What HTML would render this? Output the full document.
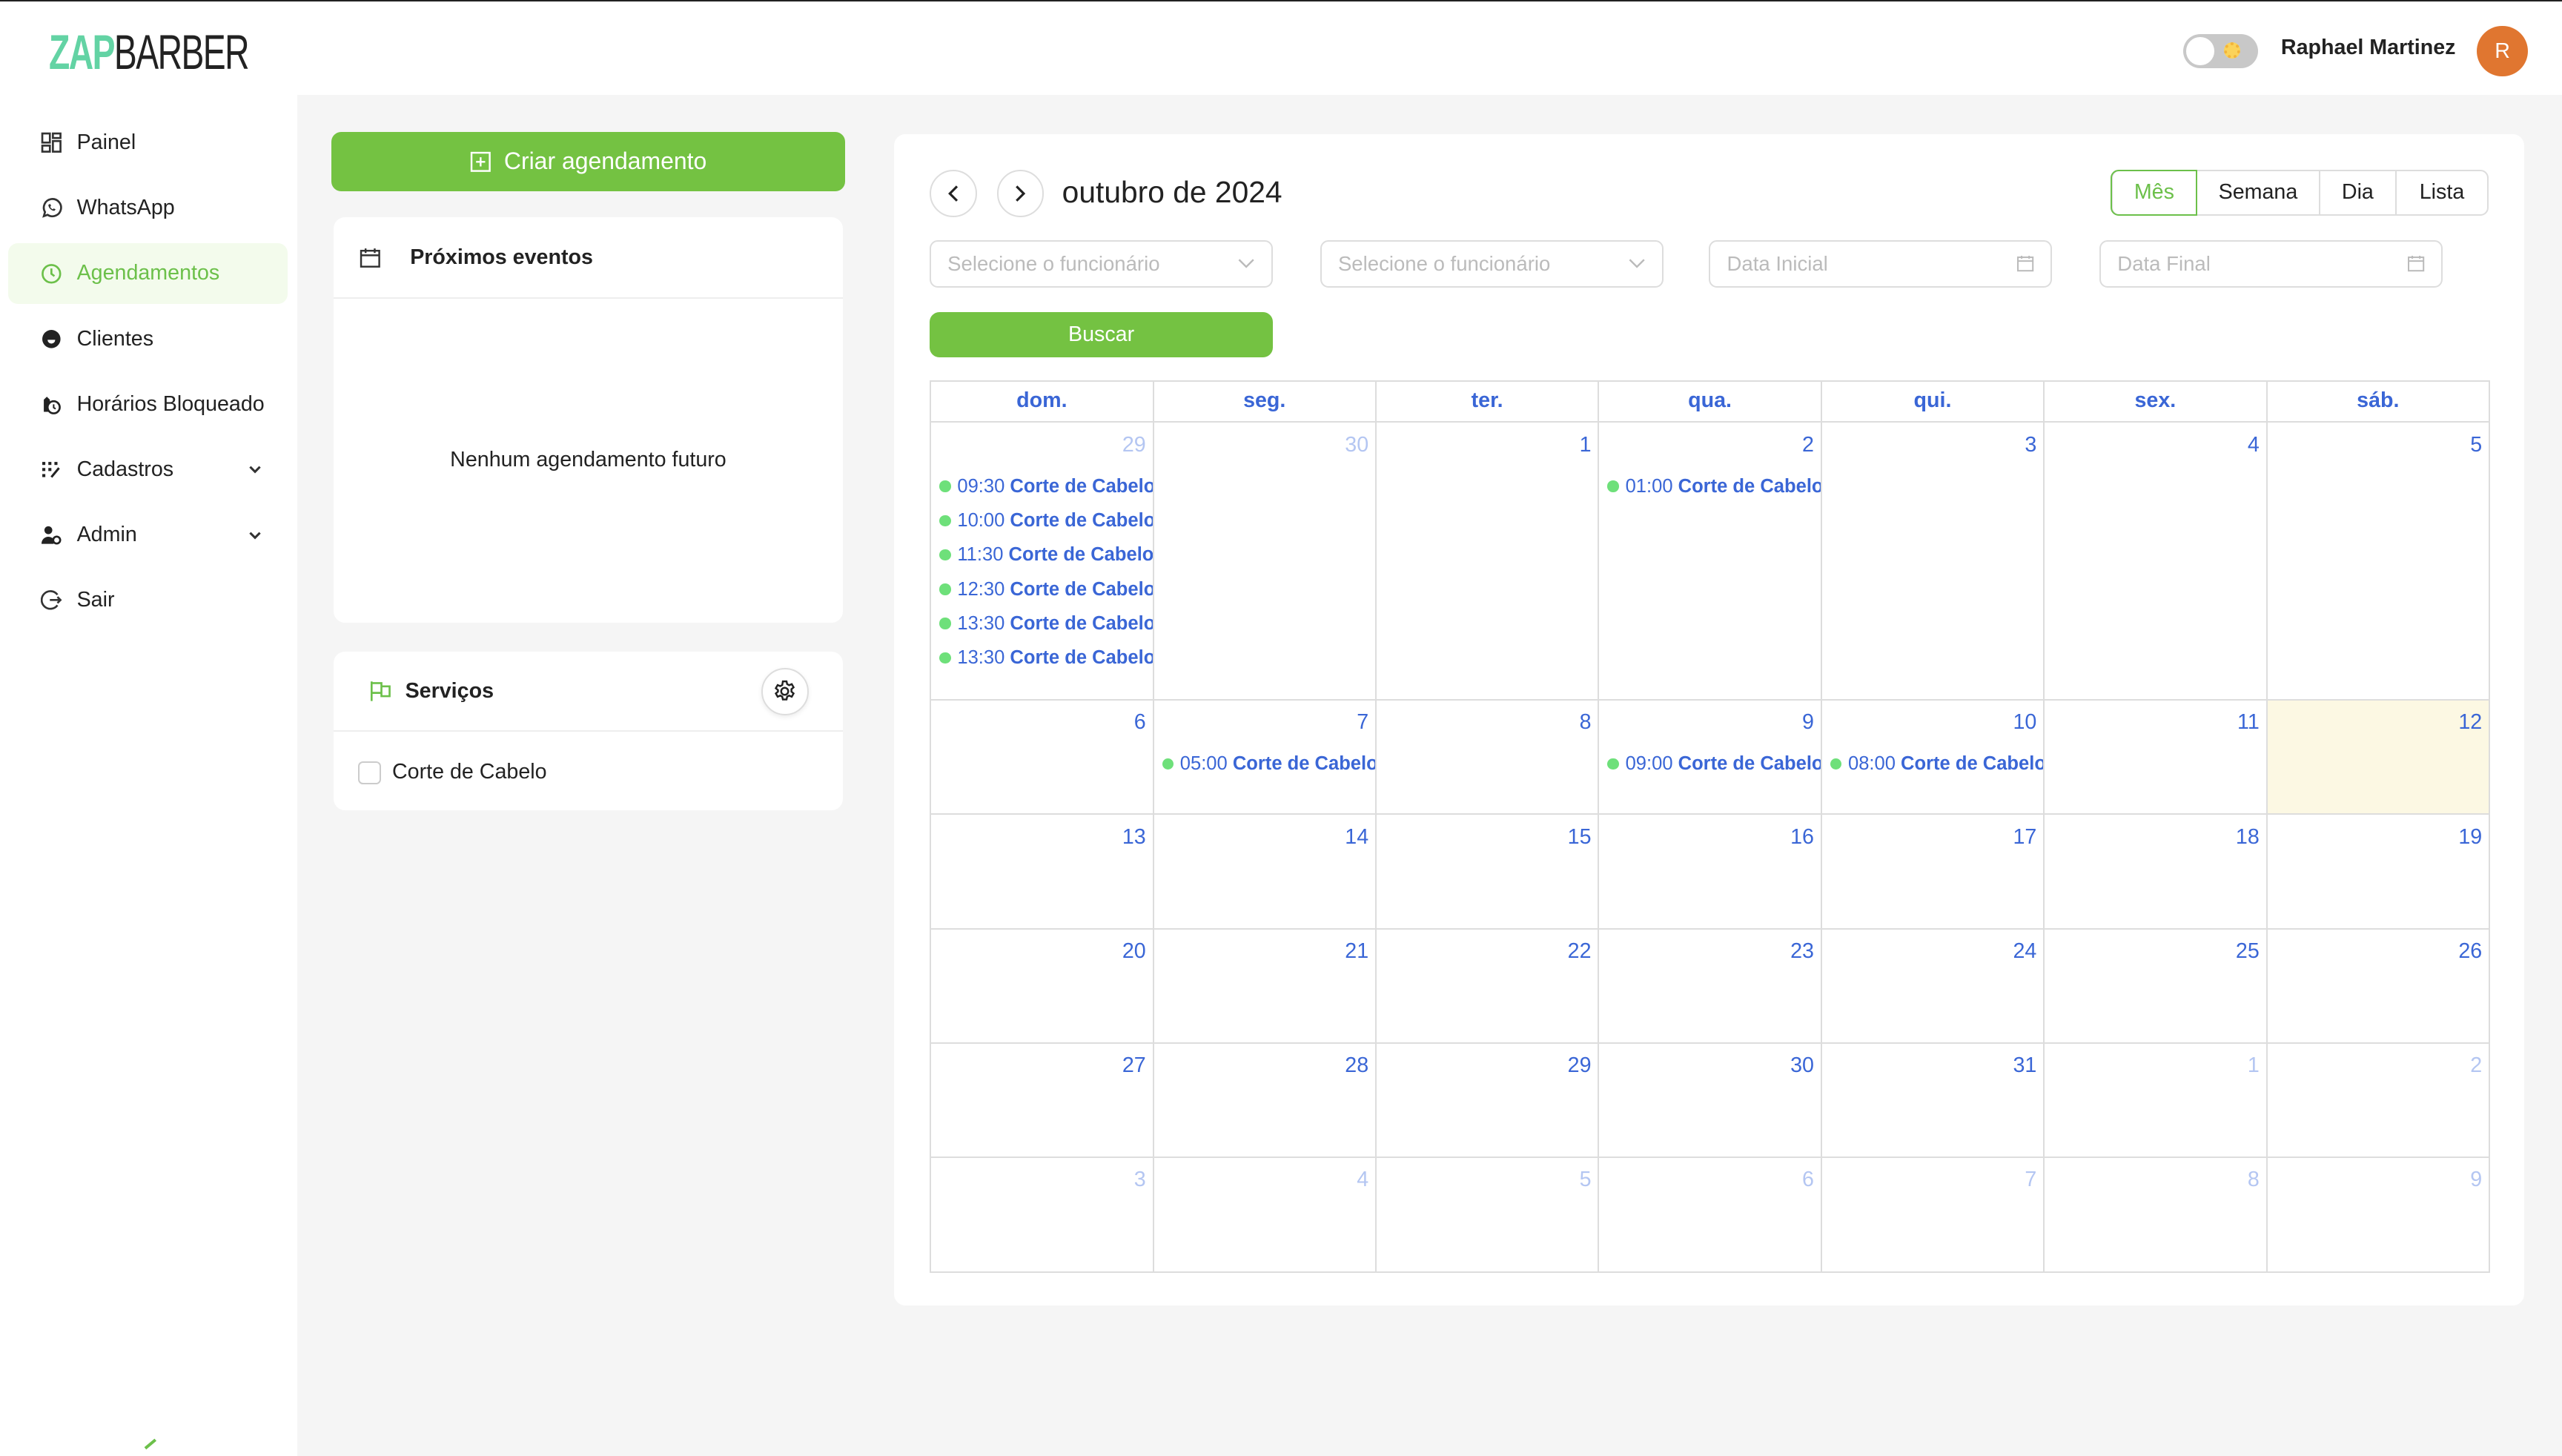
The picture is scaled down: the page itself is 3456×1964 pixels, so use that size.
<!DOCTYPE html>
<html><head><meta charset="utf-8">
<style>
html{zoom:2.2041}
*{box-sizing:border-box;margin:0;padding:0}
body{width:1568px;height:890px;overflow:hidden;background:#f5f5f5;font-family:"Liberation Sans",sans-serif;color:#222;position:relative;border-top:1px solid #222}
.abs{position:absolute}
header{position:absolute;left:0;top:0;width:1568px;height:57px;background:#fff}
.logo{left:30px;top:14px;font-size:30px;letter-spacing:-1px;transform:scaleX(.70);transform-origin:left top;white-space:nowrap}
.logo b{color:#63d3a4;font-weight:bold}
.logo span{color:#222}
aside{position:absolute;left:0;top:57px;width:182px;height:833px;background:#fff}
.nav{position:absolute;left:5px;width:171px;height:37px;font-size:13px;display:flex;align-items:center;padding-left:20px}
.nav svg{width:13px;height:13px;margin-right:9px;flex:none}
.nav .ch{position:absolute;left:146px;width:10px;height:10px}
.nav.act{background:#f3fbec;color:#6cc04a;border-radius:6px}
.card{position:absolute;background:#fff;border-radius:7px}
.btn{position:absolute;background:#74c242;color:#fff;border-radius:6px;display:flex;align-items:center;justify-content:center}
.inp{position:absolute;top:146px;width:210px;height:29px;border:1px solid #ddd;border-radius:5px;color:#bbb;font-size:12.5px;padding-left:10px;line-height:27px}
.inp svg{position:absolute;right:10px;top:8px;width:11px;height:11px}
table{position:absolute;left:569px;top:232px;width:955px;border-collapse:collapse;table-layout:fixed}
td,th{border:1px solid #ddd;vertical-align:top;padding:0}
th{height:25px;color:#3a66d6;font-size:13px;font-weight:bold;line-height:23px}
td{height:70px;color:#3a66d6;font-size:13px}
tr.r1 td{height:170px}
.n{text-align:right;padding:6px 4px 0 0;height:26px}
.o{color:#b4c6f2}
.ev{font-size:11.6px;white-space:nowrap;overflow:hidden;height:21px;line-height:16px;padding-left:5px;margin-top:5px;margin-bottom:-5px}
.ev i{display:inline-block;width:7px;height:7px;border-radius:50%;background:#6ee07a;margin-right:4px;vertical-align:0}
.today{background:#fcf8e3}
</style></head><body>
<header>
<div class="abs logo"><b>ZAP</b><span>BARBER</span></div>
<div class="abs" style="left:1336px;top:20px;width:46px;height:21px;border-radius:11px;background:#c8c8c8"></div>
<div class="abs" style="left:1338px;top:22px;width:17px;height:17px;border-radius:50%;background:#fff"></div>
<div class="abs" style="left:1361px;top:25px;width:10px;height:10px;border-radius:50%;border:2px dotted #f3b43a;background:#fbd35a"></div>
<div class="abs" style="left:1396px;top:21px;font-size:13px;font-weight:bold">Raphael Martinez</div>
<div class="abs" style="left:1516px;top:15px;width:31px;height:31px;border-radius:50%;background:#e07630;color:#fff;font-size:13px;text-align:center;line-height:31px">R</div>
</header>
<aside></aside>
<div class="nav" style="top:68px"><svg viewBox="0 0 14 14" fill="none" stroke="#333" stroke-width="1.3"><rect x="1" y="1" width="5" height="6"/><rect x="8" y="1" width="5" height="3"/><rect x="1" y="9" width="5" height="4"/><rect x="8" y="6" width="5" height="7"/></svg>Painel</div>
<div class="nav" style="top:108px"><svg viewBox="0 0 14 14" fill="none" stroke="#333" stroke-width="1.3"><path d="M2 12.5l.8-2.7A5.7 5.7 0 1 1 4.5 11.6z"/><path d="M5 5c0 2 2 4 4 4l.8-1-1.3-.6-.6.6C7 7.5 6.5 7 6.2 6.3l.6-.6L6.2 4.4z" fill="#333" stroke="none"/></svg>WhatsApp</div>
<div class="nav act" style="top:148px"><svg viewBox="0 0 14 14" fill="none" stroke="#6cc04a" stroke-width="1.3"><circle cx="7" cy="7" r="5.8"/><path d="M7 3.5V7l2 1.5"/></svg>Agendamentos</div>
<div class="nav" style="top:188px"><svg viewBox="0 0 14 14"><circle cx="7" cy="7" r="6" fill="#222"/><path d="M4.5 7.5a2.5 2.5 0 0 0 5 0" fill="#fff"/></svg>Clientes</div>
<div class="nav" style="top:228px"><svg viewBox="0 0 14 14" fill="#222"><path d="M2 12V4l2-2 2 2v2a4 4 0 0 0 0 6z"/><circle cx="8.5" cy="9" r="4" fill="none" stroke="#222" stroke-width="1.3"/><path d="M8.5 7v2.2l1.3.8" stroke="#222" fill="none"/></svg>Horários Bloqueado</div>
<div class="nav" style="top:268px"><svg viewBox="0 0 14 14" fill="#222"><rect x="1" y="2" width="2" height="2"/><rect x="5" y="2" width="2" height="2"/><rect x="9" y="2" width="2" height="2"/><rect x="1" y="6" width="2" height="2"/><rect x="5" y="6" width="2" height="2"/><rect x="1" y="10" width="2" height="2"/><path d="M7 12l5-6" stroke="#222" stroke-width="1.5"/></svg>Cadastros<svg class="ch" viewBox="0 0 10 10" fill="none" stroke="#333" stroke-width="1.4"><path d="M2 3.5l3 3 3-3"/></svg></div>
<div class="nav" style="top:308px"><svg viewBox="0 0 14 14" fill="#222"><circle cx="5" cy="4" r="2.6"/><path d="M0.5 13a4.5 4.5 0 0 1 8-3V13z"/><circle cx="10.5" cy="10.5" r="2.3" fill="none" stroke="#222" stroke-width="1.3"/></svg>Admin<svg class="ch" viewBox="0 0 10 10" fill="none" stroke="#333" stroke-width="1.4"><path d="M2 3.5l3 3 3-3"/></svg></div>
<div class="nav" style="top:348px"><svg viewBox="0 0 14 14" fill="none" stroke="#333" stroke-width="1.3"><path d="M11 3.5A5.8 5.8 0 1 0 11 10.5"/><path d="M6 7h7M11 5l2 2-2 2"/></svg>Sair</div>
<div class="abs" style="left:88px;top:882px;width:8px;height:2px;background:#6cc04a;transform:rotate(-40deg)"></div>

<div class="btn" style="left:203px;top:80px;width:314px;height:36px;font-size:14.5px"><svg viewBox="0 0 14 14" width="13" height="13" fill="none" stroke="#fff" stroke-width="1.2" style="margin-right:8px"><rect x="1" y="1" width="12" height="12"/><path d="M7 4v6M4 7h6"/></svg>Criar agendamento</div>

<div class="card" style="left:204px;top:132px;width:312px;height:248px">
<div style="height:50px;border-bottom:1px solid #eee;display:flex;align-items:center;padding-left:16px;font-size:13px;font-weight:bold"><svg viewBox="0 0 14 14" width="13" height="14" fill="none" stroke="#333" stroke-width="1.2" style="margin-right:18px"><rect x="1" y="2.5" width="12" height="10.5"/><path d="M1 5.5h12M4 1v3M10 1v3"/></svg>Próximos eventos</div>
<div style="text-align:center;margin-top:91px;font-size:13px">Nenhum agendamento futuro</div>
</div>

<div class="card" style="left:204px;top:398px;width:312px;height:97px">
<div style="height:49px;border-bottom:1px solid #eee;display:flex;align-items:center;padding-left:22px;font-size:13px;font-weight:bold"><svg viewBox="0 0 14 14" width="14" height="14" fill="none" stroke="#6cc04a" stroke-width="1.2" style="margin-right:8px"><path d="M1.5 1v12M1.5 2h6v6h-6M7.5 4h5v6h-5V8"/></svg>Serviços</div>
<div class="abs" style="left:262px;top:10px;width:29px;height:29px;border-radius:50%;border:1px solid #ddd;box-shadow:0 1px 3px rgba(0,0,0,.08)"><svg viewBox="0 0 16 16" width="15" height="15" style="margin:6px" fill="none" stroke="#222" stroke-width="1.2"><circle cx="8" cy="8" r="2.3"/><path d="M6.8 1.5h2.4l.4 1.8 1.3.7 1.7-.7 1.2 2.1-1.4 1.2v1.6l1.4 1.2-1.2 2.1-1.7-.7-1.3.7-.4 1.8H6.8l-.4-1.8-1.3-.7-1.7.7-1.2-2.1 1.4-1.2V7.2L2.2 6 3.4 3.9l1.7.7 1.3-.7z"/></svg></div>
<div class="abs" style="left:15px;top:67px;width:14px;height:14px;border:1px solid #ccc;border-radius:3px"></div>
<div class="abs" style="left:36px;top:66px;font-size:13px">Corte de Cabelo</div>
</div>

<div class="card" style="left:547px;top:81px;width:998px;height:717px"></div>
<div class="abs" style="left:569px;top:103px;width:29px;height:29px;border-radius:50%;border:1px solid #ddd"><svg viewBox="0 0 10 10" width="11" height="11" style="margin:8px" fill="none" stroke="#222" stroke-width="1.3"><path d="M7 1L3 5l4 4"/></svg></div>
<div class="abs" style="left:610px;top:103px;width:29px;height:29px;border-radius:50%;border:1px solid #ddd"><svg viewBox="0 0 10 10" width="11" height="11" style="margin:8px" fill="none" stroke="#222" stroke-width="1.3"><path d="M3 1l4 4-4 4"/></svg></div>
<div class="abs" style="left:650px;top:106px;font-size:18.5px">outubro de 2024</div>
<div class="abs" style="left:1292px;top:103px;width:231px;height:28px;border:1px solid #ddd;border-radius:5px;font-size:13px;display:flex">
<div style="width:53px;border:1px solid #6cc04a;color:#6cc04a;border-radius:5px 0 0 5px;margin:-1px 0 -1px -1px;text-align:center;line-height:26px">Mês</div>
<div style="width:75px;border-right:1px solid #ddd;text-align:center;line-height:26px">Semana</div>
<div style="width:47px;border-right:1px solid #ddd;text-align:center;line-height:26px">Dia</div>
<div style="flex:1;text-align:center;line-height:26px">Lista</div></div>

<div class="inp" style="left:569px">Selecione o funcionário<svg viewBox="0 0 10 10" fill="none" stroke="#bbb"><path d="M1 3l4 4 4-4"/></svg></div>
<div class="inp" style="left:808px">Selecione o funcionário<svg viewBox="0 0 10 10" fill="none" stroke="#bbb"><path d="M1 3l4 4 4-4"/></svg></div>
<div class="inp" style="left:1046px">Data Inicial<svg viewBox="0 0 12 12" fill="none" stroke="#bbb"><rect x="1" y="2" width="10" height="9"/><path d="M1 4.5h10M3.5 1v2M8.5 1v2"/></svg></div>
<div class="inp" style="left:1285px">Data Final<svg viewBox="0 0 12 12" fill="none" stroke="#bbb"><rect x="1" y="2" width="10" height="9"/><path d="M1 4.5h10M3.5 1v2M8.5 1v2"/></svg></div>
<div class="btn" style="left:569px;top:190px;width:210px;height:28px;font-size:13px">Buscar</div>

<table>
<tr><th>dom.</th><th>seg.</th><th>ter.</th><th>qua.</th><th>qui.</th><th>sex.</th><th>sáb.</th></tr>
<tr class="r1"><td><div class="n o">29</div>
<div class="ev"><i></i>09:30 <b>Corte de Cabelo</b></div>
<div class="ev"><i></i>10:00 <b>Corte de Cabelo</b></div>
<div class="ev"><i></i>11:30 <b>Corte de Cabelo</b></div>
<div class="ev"><i></i>12:30 <b>Corte de Cabelo</b></div>
<div class="ev"><i></i>13:30 <b>Corte de Cabelo</b></div>
<div class="ev"><i></i>13:30 <b>Corte de Cabelo</b></div></td>
<td><div class="n o">30</div></td><td><div class="n">1</div></td>
<td><div class="n">2</div><div class="ev"><i></i>01:00 <b>Corte de Cabelo</b></div></td>
<td><div class="n">3</div></td><td><div class="n">4</div></td><td><div class="n">5</div></td></tr>
<tr><td><div class="n">6</div></td><td><div class="n">7</div><div class="ev"><i></i>05:00 <b>Corte de Cabelo</b></div></td><td><div class="n">8</div></td>
<td><div class="n">9</div><div class="ev"><i></i>09:00 <b>Corte de Cabelo</b></div></td>
<td><div class="n">10</div><div class="ev"><i></i>08:00 <b>Corte de Cabelo</b></div></td><td><div class="n">11</div></td><td class="today"><div class="n">12</div></td></tr>
<tr><td><div class="n">13</div></td><td><div class="n">14</div></td><td><div class="n">15</div></td><td><div class="n">16</div></td><td><div class="n">17</div></td><td><div class="n">18</div></td><td><div class="n">19</div></td></tr>
<tr><td><div class="n">20</div></td><td><div class="n">21</div></td><td><div class="n">22</div></td><td><div class="n">23</div></td><td><div class="n">24</div></td><td><div class="n">25</div></td><td><div class="n">26</div></td></tr>
<tr><td><div class="n">27</div></td><td><div class="n">28</div></td><td><div class="n">29</div></td><td><div class="n">30</div></td><td><div class="n">31</div></td><td><div class="n o">1</div></td><td><div class="n o">2</div></td></tr>
<tr><td><div class="n o">3</div></td><td><div class="n o">4</div></td><td><div class="n o">5</div></td><td><div class="n o">6</div></td><td><div class="n o">7</div></td><td><div class="n o">8</div></td><td><div class="n o">9</div></td></tr>
</table>
</body></html>
